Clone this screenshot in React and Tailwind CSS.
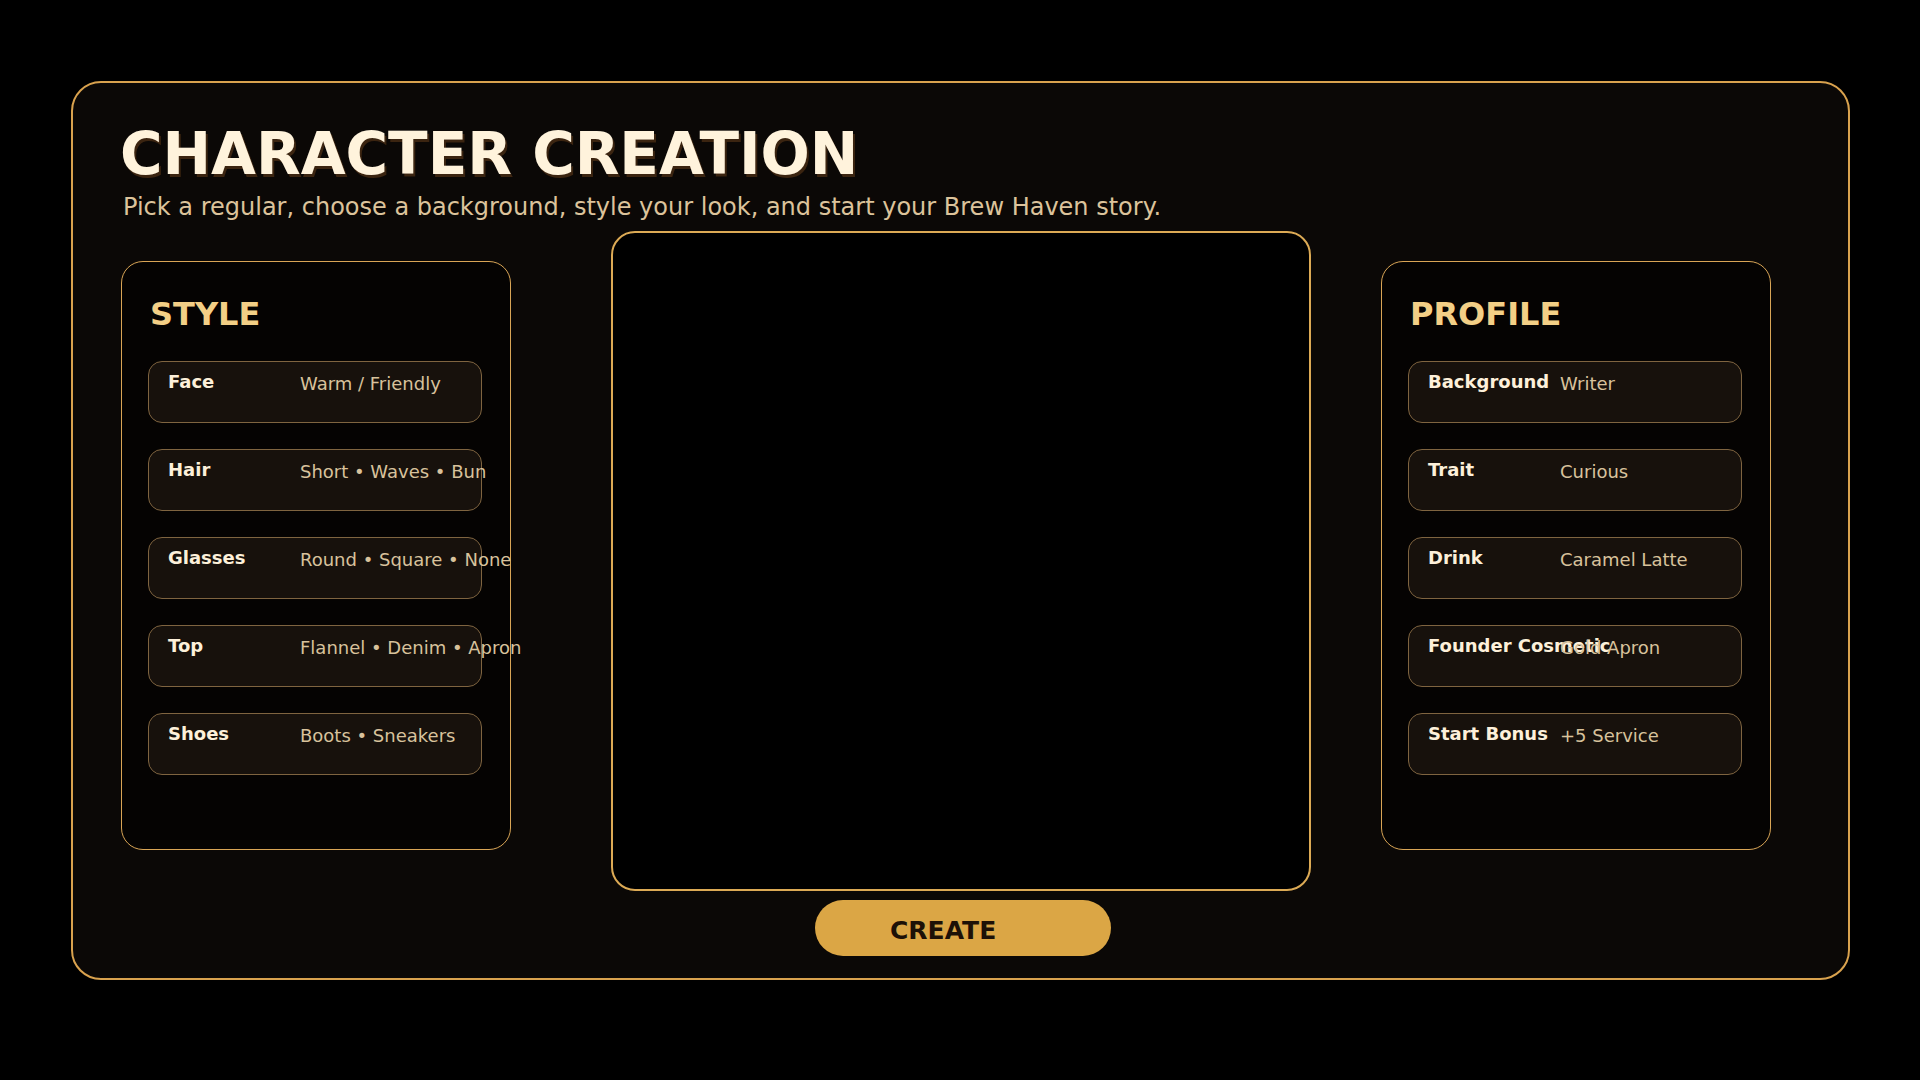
const styleRows = [
  { label: 'Face', value: 'Warm / Friendly' },
  { label: 'Hair', value: 'Short • Waves • Bun' },
  { label: 'Glasses', value: 'Round • Square • None' },
  { label: 'Top', value: 'Flannel • Denim • Apron' },
  { label: 'Shoes', value: 'Boots • Sneakers' },
]

const profileRows = [
  { label: 'Background', value: 'Writer' },
  { label: 'Trait', value: 'Curious' },
  { label: 'Drink', value: 'Caramel Latte' },
  { label: 'Founder Cosmetic', value: 'Gold Apron' },
  { label: 'Start Bonus', value: '+5 Service' },
]

function OptionRow({ label, value }) {
  return (
    <div className="h-[62px] rounded-[14px] border border-[#7f6440] bg-[#17110c] pl-[19px] pt-[11px] flex">
      <span className="w-[132px] shrink-0 whitespace-nowrap text-[18px] leading-[18px] font-bold text-[#fdf0da]">
        {label}
      </span>
      <span className="mt-[2px] whitespace-nowrap text-[18px] leading-[18px] text-[#d8c29c]">
        {value}
      </span>
    </div>
  )
}

function SidePanel({ title, rows, className = '' }) {
  return (
    <section className={`w-[390px] h-[589px] shrink-0 rounded-[22px] border-[1.5px] border-[#d9a556] bg-[#050302] pl-[26px] pr-[28px] pt-[36px] ${className}`}>
      <h2 className="ml-[2px] text-[32px] leading-[32px] font-bold text-[#f3cf86]">{title}</h2>
      <div className="mt-[31px] flex flex-col gap-[26px]">
        {rows.map(r => (
          <OptionRow key={r.label} {...r} />
        ))}
      </div>
    </section>
  )
}

export default function App() {
  return (
    <div className="w-[1920px] h-[1080px] bg-black pl-[71px] pt-[81px] font-['DejaVu_Sans',sans-serif]">
      <div className="w-[1779px] h-[899px] rounded-[30px] border-2 border-[#d9a24e] bg-[#0b0806] pl-[40px] pt-[42px]">
        <h1 className="ml-[7px] text-[58px] leading-[58px] font-bold text-[#fff3dc] [text-shadow:2px_3px_0_#3b2410]">
          CHARACTER CREATION
        </h1>
        <p className="ml-[10px] mt-[12px] text-[24px] leading-[24px] text-[#dcc39b]">
          Pick a regular, choose a background, style your look, and start your Brew Haven story.
        </p>

        <div className="mt-[12px] ml-[8px] flex items-start">
          <SidePanel title="STYLE" rows={styleRows} className="mt-[30px]" />

          <div className="ml-[100px] flex flex-col">
            <div className="w-[700px] h-[660px] rounded-[24px] border-2 border-[#dcaa55] bg-black" />
            <button className="mt-[9px] ml-[204px] w-[296px] h-[56px] rounded-full bg-[#dba645] pl-[75px] pt-[6px] text-left text-[25px] leading-[50px] font-bold text-[#1d1107]">
              CREATE
            </button>
          </div>

          <SidePanel title="PROFILE" rows={profileRows} className="mt-[30px] ml-[70px]" />
        </div>
      </div>
    </div>
  )
}
